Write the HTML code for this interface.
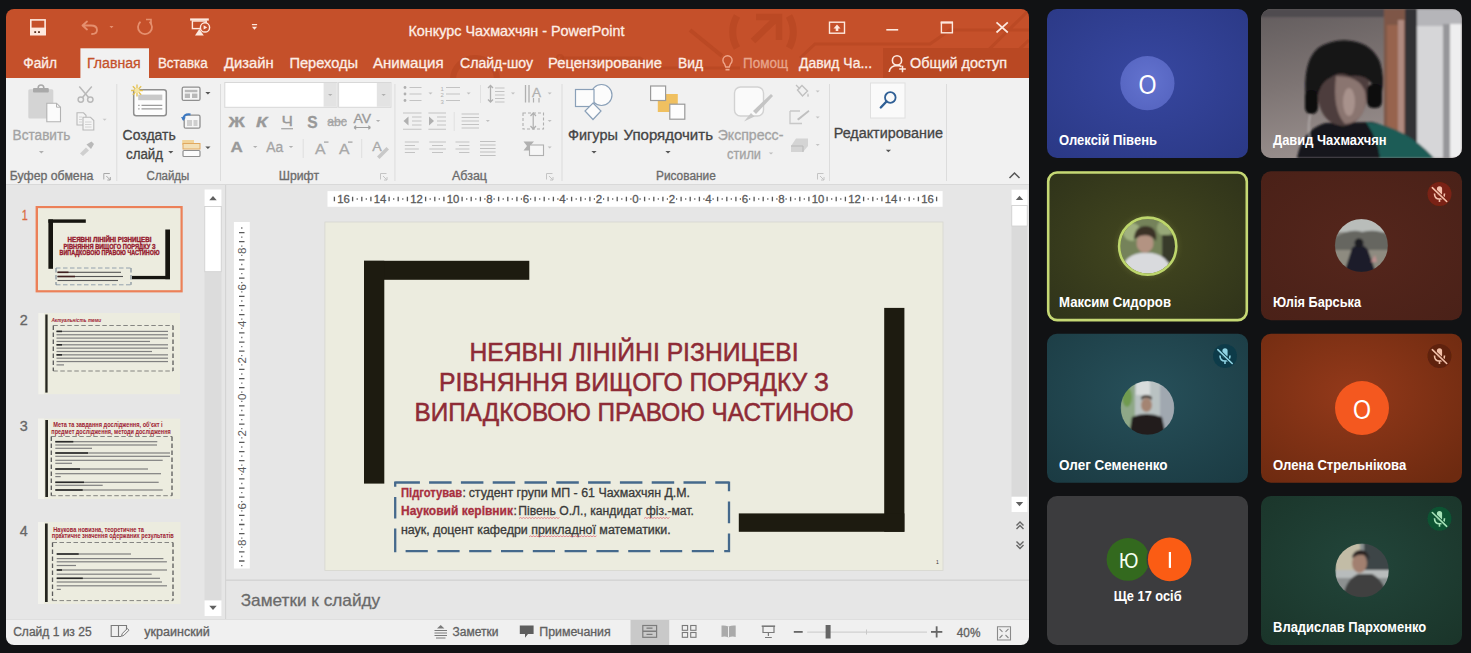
<!DOCTYPE html>
<html><head><meta charset="utf-8"><style>
html,body{margin:0;padding:0;background:#111214;overflow:hidden}
svg{display:block;font-family:"Liberation Sans",sans-serif}
</style></head><body>
<svg width="1471" height="653" viewBox="0 0 1471 653">
<defs>
<clipPath id="win"><rect x="6" y="9" width="1023" height="636" rx="8"/></clipPath>
<radialGradient id="gBlue" cx="50%" cy="45%" r="70%"><stop offset="0" stop-color="#3747a0"/><stop offset="1" stop-color="#2b3986"/></radialGradient>
<radialGradient id="gOlive" cx="50%" cy="50%" r="70%"><stop offset="0" stop-color="#43471f"/><stop offset="1" stop-color="#2f331a"/></radialGradient>
<radialGradient id="gMaroon" cx="50%" cy="50%" r="70%"><stop offset="0" stop-color="#55261c"/><stop offset="1" stop-color="#4a2118"/></radialGradient>
<radialGradient id="gTeal" cx="50%" cy="40%" r="75%"><stop offset="0" stop-color="#27505a"/><stop offset="1" stop-color="#1b3b43"/></radialGradient>
<radialGradient id="gOrange" cx="45%" cy="40%" r="75%"><stop offset="0" stop-color="#93391a"/><stop offset="1" stop-color="#6d2a10"/></radialGradient>
<radialGradient id="gGreen" cx="50%" cy="45%" r="75%"><stop offset="0" stop-color="#22453a"/><stop offset="1" stop-color="#1a3429"/></radialGradient>
</defs>
<g clip-path="url(#win)">
<rect x="6" y="9" width="1023" height="69" fill="#c5502a"/>
<g clip-path="url(#win)" fill="none" stroke="#b3441f" stroke-opacity="0.55">
<path d="M737 16 A32 32 0 0 0 737 48 M789 16 A32 32 0 0 1 789 48" stroke-width="7"/>
<path d="M753 41 L778 17 M756 17 H779 V40" stroke-width="6.5"/>
<path d="M690 30 L722 56" stroke-width="4"/>
<circle cx="475" cy="80" r="22" stroke-width="6"/>
<path d="M560 58 H640 L655 68 H740 M800 58 L815 44 H930 L950 30 H1029 M990 78 L1029 40 M960 78 L1029 10" stroke-width="3"/>
<circle cx="560" cy="58" r="3" stroke-width="2"/>
</g>
<rect x="883" y="48" width="146" height="30" fill="#b94823"/>
<rect x="6" y="78" width="1023" height="106.5" fill="#f1f1f1"/>
<rect x="6" y="184" width="1023" height="1" fill="#d9d9d9"/>
<rect x="6" y="185" width="1023" height="434" fill="#e6e6e6"/>
<rect x="6" y="619" width="1023" height="26" fill="#f0f0f0"/>
<rect x="6" y="619" width="1023" height="1" fill="#dedede"/>
</g>
<text x="408.5" y="35.7" font-size="14.4" fill="#fdeee6" textLength="216" lengthAdjust="spacingAndGlyphs" stroke="#fdeee6" stroke-width="0.3">Конкурс Чахмахчян - PowerPoint</text>
<rect x="80.4" y="48.3" width="68.6" height="30.7" fill="#f1f1f1"/>
<text x="23.3" y="67.5" font-size="14" fill="#fdeee6" textLength="33.7" lengthAdjust="spacingAndGlyphs" stroke="#fdeee6" stroke-width="0.3">Файл</text>
<text x="87" y="67.5" font-size="14" fill="#c5502a" textLength="53.7" lengthAdjust="spacingAndGlyphs" stroke="#c5502a" stroke-width="0.3">Главная</text>
<text x="157.9" y="67.5" font-size="14" fill="#fdeee6" textLength="49.7" lengthAdjust="spacingAndGlyphs" stroke="#fdeee6" stroke-width="0.3">Вставка</text>
<text x="224" y="67.5" font-size="14" fill="#fdeee6" textLength="49.7" lengthAdjust="spacingAndGlyphs" stroke="#fdeee6" stroke-width="0.3">Дизайн</text>
<text x="289.5" y="67.5" font-size="14" fill="#fdeee6" textLength="68.5" lengthAdjust="spacingAndGlyphs" stroke="#fdeee6" stroke-width="0.3">Переходы</text>
<text x="373" y="67.5" font-size="14" fill="#fdeee6" textLength="70.7" lengthAdjust="spacingAndGlyphs" stroke="#fdeee6" stroke-width="0.3">Анимация</text>
<text x="460" y="67.5" font-size="14" fill="#fdeee6" textLength="73" lengthAdjust="spacingAndGlyphs" stroke="#fdeee6" stroke-width="0.3">Слайд-шоу</text>
<text x="548" y="67.5" font-size="14" fill="#fdeee6" textLength="114" lengthAdjust="spacingAndGlyphs" stroke="#fdeee6" stroke-width="0.3">Рецензирование</text>
<text x="678" y="67.5" font-size="14" fill="#fdeee6" textLength="25" lengthAdjust="spacingAndGlyphs" stroke="#fdeee6" stroke-width="0.3">Вид</text>
<text x="799" y="67.5" font-size="14" fill="#fdeee6" textLength="73" lengthAdjust="spacingAndGlyphs" stroke="#fdeee6" stroke-width="0.3">Давид Ча...</text>
<text x="910" y="67.5" font-size="14" fill="#fdeee6" textLength="97" lengthAdjust="spacingAndGlyphs" stroke="#fdeee6" stroke-width="0.3">Общий доступ</text>
<text x="743" y="67.5" font-size="14" fill="#e8a58c" textLength="45" lengthAdjust="spacingAndGlyphs" stroke="#e8a58c" stroke-width="0.3">Помощ</text>
<text x="9.8" y="180.3" font-size="12" fill="#6b6b6b" textLength="83.5" lengthAdjust="spacingAndGlyphs" stroke="#6b6b6b" stroke-width="0.3">Буфер обмена</text>
<text x="146.6" y="180.3" font-size="12" fill="#6b6b6b" textLength="42.7" lengthAdjust="spacingAndGlyphs" stroke="#6b6b6b" stroke-width="0.3">Слайды</text>
<text x="278.8" y="180.3" font-size="12" fill="#6b6b6b" textLength="40.2" lengthAdjust="spacingAndGlyphs" stroke="#6b6b6b" stroke-width="0.3">Шрифт</text>
<text x="452" y="180.3" font-size="12" fill="#6b6b6b" textLength="35" lengthAdjust="spacingAndGlyphs" stroke="#6b6b6b" stroke-width="0.3">Абзац</text>
<text x="656" y="180.3" font-size="12" fill="#6b6b6b" textLength="59.8" lengthAdjust="spacingAndGlyphs" stroke="#6b6b6b" stroke-width="0.3">Рисование</text>
<text x="12.6" y="139.7" font-size="14" fill="#a3a3a3" textLength="57.7" lengthAdjust="spacingAndGlyphs" stroke="#a3a3a3" stroke-width="0.3">Вставить</text>
<text x="122.6" y="139.7" font-size="14" fill="#444444" textLength="53.1" lengthAdjust="spacingAndGlyphs" stroke="#444444" stroke-width="0.3">Создать</text>
<text x="126" y="159" font-size="14" fill="#444444" textLength="37" lengthAdjust="spacingAndGlyphs" stroke="#444444" stroke-width="0.3">слайд</text>
<text x="568" y="139.8" font-size="14" fill="#444444" textLength="49.8" lengthAdjust="spacingAndGlyphs" stroke="#444444" stroke-width="0.3">Фигуры</text>
<text x="623.5" y="139.8" font-size="14" fill="#444444" textLength="89.5" lengthAdjust="spacingAndGlyphs" stroke="#444444" stroke-width="0.3">Упорядочить</text>
<text x="717.7" y="139.8" font-size="14" fill="#a3a3a3" textLength="65.7" lengthAdjust="spacingAndGlyphs" stroke="#a3a3a3" stroke-width="0.3">Экспресс-</text>
<text x="727" y="158.8" font-size="14" fill="#a3a3a3" textLength="34" lengthAdjust="spacingAndGlyphs" stroke="#a3a3a3" stroke-width="0.3">стили</text>
<text x="833.7" y="137.8" font-size="14" fill="#444444" textLength="109.3" lengthAdjust="spacingAndGlyphs" stroke="#444444" stroke-width="0.3">Редактирование</text>
<rect x="324.9" y="222" width="618.1" height="348.5" fill="#ececdf"/>
<rect x="364" y="260.8" width="165.3" height="19.0" fill="#1d1b10"/>
<rect x="364" y="260.8" width="20.3" height="222.8" fill="#1d1b10"/>
<rect x="884.2" y="307.9" width="20.2" height="223.9" fill="#1d1b10"/>
<rect x="738.8" y="513.4" width="165.6" height="18.4" fill="#1d1b10"/>
<text x="634" y="361" font-size="26" fill="#8e2b36" text-anchor="middle" textLength="329" lengthAdjust="spacingAndGlyphs" stroke="#8e2b36" stroke-width="0.55">НЕЯВНІ ЛІНІЙНІ РІЗНИЦЕВІ</text>
<text x="634" y="391.2" font-size="26" fill="#8e2b36" text-anchor="middle" textLength="390" lengthAdjust="spacingAndGlyphs" stroke="#8e2b36" stroke-width="0.55">РІВНЯННЯ ВИЩОГО ПОРЯДКУ З</text>
<text x="634" y="420.6" font-size="26" fill="#8e2b36" text-anchor="middle" textLength="439" lengthAdjust="spacingAndGlyphs" stroke="#8e2b36" stroke-width="0.55">ВИПАДКОВОЮ ПРАВОЮ ЧАСТИНОЮ</text>
<path d="M395.2 482.5 H419.9 M429.1 482.5 H451.6 M460.9 482.5 H483.4 M492.7 482.5 H515.2 M524.5 482.5 H547.0 M556.3 482.5 H578.8 M588.1 482.5 H610.6 M619.9 482.5 H642.4 M651.7 482.5 H674.2 M683.5 482.5 H706.0 M715.3 482.5 H729 M405.6 551.1 H427.8 M437.4 551.1 H459.6 M469.2 551.1 H491.4 M501.0 551.1 H523.2 M532.8 551.1 H555.0 M564.6 551.1 H586.8 M596.4 551.1 H618.6 M628.2 551.1 H650.4 M660.0 551.1 H682.2 M691.8 551.1 H714.0 M724.2 551.1 H730.1 M395.2 481.4 V486.7 M395.2 497 V518.6 M395.2 528.4 V552.2 M729 481.4 V491.3 M729 501.5 V523.3 M729 533.5 V552.2" fill="none" stroke="#45698c" stroke-width="2.3"/>
<text x="401" y="497.1" font-size="12" fill="#a8303f" font-weight="bold" textLength="61.2" lengthAdjust="spacingAndGlyphs" stroke="#a8303f" stroke-width="0.3">Підготував</text>
<text x="462.6" y="497.1" font-size="12" fill="#3a3a3a" stroke="#3a3a3a" stroke-width="0.3">:</text>
<text x="468.7" y="497.1" font-size="12" fill="#3a3a3a" textLength="221.3" lengthAdjust="spacingAndGlyphs" stroke="#3a3a3a" stroke-width="0.3">студент групи МП - 61 Чахмахчян Д.М.</text>
<text x="401" y="515.3" font-size="12" fill="#a8303f" font-weight="bold" textLength="112" lengthAdjust="spacingAndGlyphs" stroke="#a8303f" stroke-width="0.3">Науковий керівник</text>
<text x="513.4" y="515.3" font-size="12" fill="#3a3a3a" stroke="#3a3a3a" stroke-width="0.3">:</text>
<text x="518.2" y="515.3" font-size="12" fill="#3a3a3a" textLength="175.8" lengthAdjust="spacingAndGlyphs" stroke="#3a3a3a" stroke-width="0.3">Півень О.Л., кандидат фіз.-мат.</text>
<text x="401" y="533.6" font-size="12" fill="#3a3a3a" textLength="269.6" lengthAdjust="spacingAndGlyphs" stroke="#3a3a3a" stroke-width="0.3">наук, доцент кафедри прикладної математики.</text>
<rect x="226" y="579.5" width="803" height="1.3" fill="#d2d2d2"/>
<text x="240.7" y="605.6" font-size="17" fill="#6a6a6a" textLength="139.5" lengthAdjust="spacingAndGlyphs" stroke="#6a6a6a" stroke-width="0.3">Заметки к слайду</text>
<text x="13.2" y="636.4" font-size="12" fill="#606060" textLength="78.4" lengthAdjust="spacingAndGlyphs" stroke="#606060" stroke-width="0.3">Слайд 1 из 25</text>
<text x="144.3" y="636.4" font-size="12" fill="#606060" textLength="65.4" lengthAdjust="spacingAndGlyphs" stroke="#606060" stroke-width="0.3">украинский</text>
<text x="452.6" y="636.4" font-size="12" fill="#606060" textLength="45.9" lengthAdjust="spacingAndGlyphs" stroke="#606060" stroke-width="0.3">Заметки</text>
<text x="539.3" y="636.4" font-size="12" fill="#606060" textLength="71.4" lengthAdjust="spacingAndGlyphs" stroke="#606060" stroke-width="0.3">Примечания</text>
<text x="956.8" y="636.8" font-size="12" fill="#606060" textLength="23.6" lengthAdjust="spacingAndGlyphs" stroke="#606060" stroke-width="0.3">40%</text>
<rect x="1047" y="9" width="201" height="149" rx="10" fill="url(#gBlue)"/>
<rect x="1261" y="9" width="201" height="149" rx="10" fill="#6e6a68"/>
<rect x="1047" y="171.3" width="201" height="149" rx="10" fill="url(#gOlive)"/>
<rect x="1261" y="171.3" width="201" height="149" rx="10" fill="url(#gMaroon)"/>
<rect x="1047" y="333.7" width="201" height="149" rx="10" fill="url(#gTeal)"/>
<rect x="1261" y="333.7" width="201" height="149" rx="10" fill="url(#gOrange)"/>
<rect x="1047" y="496" width="201" height="149" rx="10" fill="#3c3c3e"/>
<rect x="1261" y="496" width="201" height="149" rx="10" fill="url(#gGreen)"/>
<rect x="30.8" y="19.9" width="14.3" height="14.6" fill="none" stroke="#fde8de" stroke-width="1.6"/>
<rect x="30" y="27.6" width="15.9" height="7.7" fill="#fde8de"/>
<rect x="34.3" y="31.2" width="1.8" height="1.8" fill="#5a3020"/>
<rect x="38.1" y="31.2" width="1.8" height="1.8" fill="#5a3020"/>
<path d="M82.5 25.5 L87 21.5 M82.5 25.5 L87 29.5 M82.5 25.5 H91 Q97 25.5 97 30 Q97 34 92 34" fill="none" stroke="#e58f6e" stroke-width="1.8" stroke-linecap="round"/>
<path d="M109.5 26 h4 l-2 2.2z" fill="#e58f6e"/>
<path d="M149.5 21.8 A7 7 0 1 1 140.5 21.8" fill="none" stroke="#e58f6e" stroke-width="1.8"/>
<path d="M146 19.5 h5 v5" fill="none" stroke="#e58f6e" stroke-width="1.6"/>
<rect x="190.1" y="18.4" width="18.7" height="2.2" fill="#fde8de"/>
<rect x="192.4" y="21" width="13.8" height="7.6" fill="none" stroke="#fde8de" stroke-width="1.4"/>
<circle cx="205" cy="27.4" r="4.6" fill="#c5502a" stroke="#fde8de" stroke-width="1.4"/>
<path d="M203.6 25.2 L207.2 27.4 L203.6 29.6z" fill="#fde8de"/>
<path d="M199.3 29 L195 35.6 H203.8z" fill="#fde8de"/>
<rect x="251.9" y="24" width="5.2" height="1.2" fill="#fde8de"/>
<path d="M251.9 26.7 h5.2 l-2.6 3z" fill="#fde8de"/>
<rect x="829.5" y="22.2" width="15" height="11" fill="none" stroke="#fde8de" stroke-width="1.4"/>
<path d="M837 24.5 L840.5 28.5 H838.3 V31 H835.7 V28.5 H833.5z" fill="#fde8de"/>
<rect x="886.3" y="29" width="11.9" height="1.6" fill="#fde8de"/>
<rect x="941.4" y="22.4" width="11" height="10.4" fill="none" stroke="#fde8de" stroke-width="1.4"/>
<rect x="940.7" y="21.5" width="12.3" height="2.1" fill="#fde8de"/>
<path d="M996.5 22.3 L1007.8 32.5 M1007.8 22.3 L996.5 32.5" stroke="#fde8de" stroke-width="1.7"/>
<path d="M724.5 63.8 A4.6 4.6 0 1 1 730.5 63.8 L729.3 67 H725.7z" fill="none" stroke="#eea58a" stroke-width="1.4"/>
<rect x="725.5" y="68.8" width="4.0" height="1.7" fill="#eea58a"/>
<circle cx="897" cy="60.4" r="4.6" fill="none" stroke="#fde8de" stroke-width="1.6"/>
<path d="M889.2 72 Q890 65.8 897 65.5 Q900 65.5 901.5 66.5" fill="none" stroke="#fde8de" stroke-width="1.6"/>
<path d="M902.5 65.8 V72.3 M899.2 69 H905.8" stroke="#fde8de" stroke-width="1.5"/>
<rect x="116.3" y="84" width="1.0" height="97" fill="#dcdcdc"/>
<rect x="220" y="84" width="1" height="97" fill="#dcdcdc"/>
<rect x="394.4" y="84" width="1.0" height="97" fill="#dcdcdc"/>
<rect x="561.5" y="84" width="1.0" height="97" fill="#dcdcdc"/>
<rect x="829" y="84" width="1" height="97" fill="#dcdcdc"/>
<rect x="946" y="84" width="1" height="97" fill="#dcdcdc"/>
<rect x="28.3" y="89.2" width="25" height="29.4" rx="1.5" fill="#d4d4d4"/>
<rect x="33" y="88" width="15.8" height="4.6" rx="1" fill="#a9a9a9"/>
<circle cx="41" cy="87.8" r="2.8" fill="none" stroke="#a9a9a9" stroke-width="1.6"/>
<path d="M46.8 103.2 H56.5 L60.5 107.2 V121.8 H46.8z" fill="#fbfbfb" stroke="#b3b3b3" stroke-width="1.1"/>
<path d="M56.5 103.2 V107.2 H60.5" fill="none" stroke="#b3b3b3" stroke-width="1"/>
<path d="M38.9 151.05 h5.0 l-2.5 2.5z" fill="#b0b0b0"/>
<circle cx="80.8" cy="99.6" r="2.7" fill="none" stroke="#b9b9b9" stroke-width="1.5"/>
<circle cx="90.3" cy="99.6" r="2.7" fill="none" stroke="#b9b9b9" stroke-width="1.5"/>
<path d="M82.5 97.5 L91.8 86.5 M88.6 97.5 L79.3 86.5" stroke="#b9b9b9" stroke-width="1.5"/>
<path d="M77 112.8 H83.5 L86 115.3 V125 H77z" fill="#f4f4f4" stroke="#b9b9b9" stroke-width="1.1"/>
<path d="M83 117.3 H90.5 L93.8 120.6 V130 H83z" fill="#f4f4f4" stroke="#b9b9b9" stroke-width="1.1"/>
<path d="M85 122 H91.5 M85 124.5 H91.5 M85 127 H91.5 M79 117 H82 M79 119.5 H82 M79 122 H82" stroke="#cfcfcf" stroke-width="0.9"/>
<path d="M102.6 118.8 h4 l-2 2z" fill="#c8c8c8"/>
<path d="M80 153.5 L86 147.5 L89 150.5 L83 156z" fill="#cfcfcf"/>
<path d="M86.5 144.5 L91.5 141.5 L94 144 L91 149z" fill="#b9b9b9"/>
<rect x="133.7" y="89.8" width="32.6" height="26" rx="2.5" fill="#fdfdfd" stroke="#8f8f8f" stroke-width="1.5"/>
<rect x="138.2" y="94.6" width="24.1" height="5.6" fill="#c9c9c9"/>
<path d="M141.5 105.4 H162.3 M141.5 108.9 H162.3" stroke="#9a9a9a" stroke-width="1.1"/>
<path d="M138.2 105.4 H139.6 M138.2 108.9 H139.6" stroke="#9a9a9a" stroke-width="1.1"/>
<g stroke="#e3c050" stroke-width="1.3"><path d="M137 84.6 V96.4 M131.1 90.5 H142.9 M132.8 86.3 L141.2 94.7 M141.2 86.3 L132.8 94.7"/></g>
<circle cx="137" cy="90.5" r="2.6" fill="#f6e6a6"/>
<path d="M168.20000000000002 151.0 h5.2 l-2.6 2.6z" fill="#555"/>
<rect x="182.2" y="87.2" width="17.8" height="13.2" rx="1.5" fill="#f6f6f6" stroke="#8f8f8f" stroke-width="1.3"/>
<rect x="184.8" y="89.8" width="12.6" height="2.4" fill="#b9b9b9"/>
<rect x="184.8" y="93.6" width="5.2" height="4.4" fill="#b9b9b9"/>
<rect x="192" y="93.6" width="5.4" height="4.4" fill="#b9b9b9"/>
<path d="M205.3 92.0 h5.2 l-2.6 2.6z" fill="#555"/>
<rect x="184.2" y="115.2" width="15.8" height="13" rx="1.5" fill="#f6f6f6" stroke="#8f8f8f" stroke-width="1.3"/>
<rect x="187" y="120" width="5" height="6" fill="#cfcfcf"/>
<rect x="193.5" y="120" width="4.0" height="6" fill="#cfcfcf"/>
<path d="M183 119.5 Q184 113.5 190.5 114.5" fill="none" stroke="#3b78c2" stroke-width="2"/>
<path d="M181 117 L183.2 121 L185.8 117.6z" fill="#3b78c2"/>
<rect x="182.2" y="140" width="11.8" height="5" fill="#f1d39a"/>
<rect x="183" y="143.5" width="17" height="5.5" fill="#f3e0b8" stroke="#e0a860" stroke-width="1"/>
<rect x="183" y="150.5" width="17" height="6" rx="1" fill="#fbfbfb" stroke="#8f8f8f" stroke-width="1.2"/>
<path d="M205.3 146.39999999999998 h5.2 l-2.6 2.6z" fill="#555"/>
<rect x="224.8" y="82.5" width="112.3" height="24.8" fill="#ffffff" stroke="#d8d8d8" stroke-width="1"/>
<rect x="323.6" y="83" width="13.0" height="23.8" fill="#e3e3e3"/>
<rect x="338.6" y="82.5" width="52.3" height="24.8" fill="#ffffff" stroke="#d8d8d8" stroke-width="1"/>
<rect x="376.8" y="83" width="13.6" height="23.8" fill="#e3e3e3"/>
<path d="M328.0 93.9 h4.4 l-2.2 2.2z" fill="#b0b0b0"/>
<path d="M381.40000000000003 93.9 h4.4 l-2.2 2.2z" fill="#b0b0b0"/>
<text x="228.5" y="126.9" font-size="15" fill="#999999" font-weight="bold" textLength="16.3" lengthAdjust="spacingAndGlyphs" stroke="#999999" stroke-width="0.3">Ж</text>
<text x="256.1" y="126.9" font-size="15" fill="#999999" font-weight="bold" textLength="11.5" lengthAdjust="spacingAndGlyphs" stroke="#999999" stroke-width="0.3" font-style="italic">К</text>
<text x="281.5" y="126.2" font-size="14" fill="#999999" textLength="11.5" lengthAdjust="spacingAndGlyphs" stroke="#999999" stroke-width="0.3">Ч</text>
<rect x="281.2" y="128.2" width="11.8" height="1.1" fill="#999999"/>
<text x="307.2" y="127.5" font-size="16" fill="#999999" font-weight="bold" textLength="10.4" lengthAdjust="spacingAndGlyphs" stroke="#999999" stroke-width="0.3">S</text>
<text x="327.3" y="125.5" font-size="12" fill="#a4a4a4" textLength="19.6" lengthAdjust="spacingAndGlyphs" stroke="#a4a4a4" stroke-width="0.3">abc</text>
<rect x="327.3" y="121.2" width="19.7" height="1.1" fill="#a4a4a4"/>
<text x="353.4" y="123.3" font-size="12" fill="#9a9a9a" textLength="17.6" lengthAdjust="spacingAndGlyphs" stroke="#9a9a9a" stroke-width="0.3">AV</text>
<path d="M354 127.5 H370.5 M354 127.5 l2.2 -1.8 M354 127.5 l2.2 1.8 M370.5 127.5 l-2.2 -1.8 M370.5 127.5 l-2.2 1.8" stroke="#a0a0a0" stroke-width="1.1" fill="none"/>
<path d="M375.90000000000003 119.9 h4.4 l-2.2 2.2z" fill="#b0b0b0"/>
<text x="230.5" y="151.6" font-size="15" fill="#999999" font-weight="bold" textLength="12.3" lengthAdjust="spacingAndGlyphs" stroke="#999999" stroke-width="0.3">A</text>
<path d="M253.0 145.9 h4.4 l-2.2 2.2z" fill="#b0b0b0"/>
<text x="266.3" y="151.6" font-size="14" fill="#a4a4a4" textLength="16.9" lengthAdjust="spacingAndGlyphs" stroke="#a4a4a4" stroke-width="0.3">Aa</text>
<path d="M288.8 145.9 h4.4 l-2.2 2.2z" fill="#b0b0b0"/>
<rect x="302.7" y="139" width="1.0" height="19" fill="#dedede"/>
<text x="315" y="154.2" font-size="15" fill="#a8a8a8" textLength="10.5" lengthAdjust="spacingAndGlyphs" stroke="#a8a8a8" stroke-width="0.3">A</text>
<rect x="324" y="141.5" width="4.5" height="1.2" fill="#a0a0a0"/>
<text x="339" y="154.2" font-size="15" fill="#a8a8a8" textLength="10.5" lengthAdjust="spacingAndGlyphs" stroke="#a8a8a8" stroke-width="0.3">A</text>
<rect x="348" y="141.5" width="4.5" height="1.2" fill="#a0a0a0"/>
<rect x="361.2" y="139" width="1.0" height="19" fill="#dedede"/>
<text x="372.3" y="151" font-size="13" fill="#a8a8a8" textLength="9.5" lengthAdjust="spacingAndGlyphs" stroke="#a8a8a8" stroke-width="0.3">A</text>
<path d="M377 156.5 L386.5 147 L389 149.5 L379.5 159z" fill="#c8c8c8"/>
<path d="M103.8 179.5 V173.5 H109.8" fill="none" stroke="#a8a8a8" stroke-width="1"/>
<path d="M106.3 176.0 L110.3 180.0 M110.3 177.0 V180.0 H107.3" fill="none" stroke="#a8a8a8" stroke-width="1"/>
<path d="M380.5 179.5 V173.5 H386.5" fill="none" stroke="#c4c4c4" stroke-width="1"/>
<path d="M383.0 176.0 L387.0 180.0 M387.0 177.0 V180.0 H384.0" fill="none" stroke="#c4c4c4" stroke-width="1"/>
<path d="M546.5 179.5 V173.5 H552.5" fill="none" stroke="#c4c4c4" stroke-width="1"/>
<path d="M549.0 176.0 L553.0 180.0 M553.0 177.0 V180.0 H550.0" fill="none" stroke="#c4c4c4" stroke-width="1"/>
<path d="M817.5 179.5 V173.5 H823.5" fill="none" stroke="#c4c4c4" stroke-width="1"/>
<path d="M820.0 176.0 L824.0 180.0 M824.0 177.0 V180.0 H821.0" fill="none" stroke="#c4c4c4" stroke-width="1"/>
<circle cx="405" cy="87.5" r="1.4" fill="#b0b0b0"/>
<circle cx="405" cy="94" r="1.4" fill="#b0b0b0"/>
<circle cx="405" cy="100.5" r="1.4" fill="#b0b0b0"/>
<path d="M409.5 87.5 H421.5 M409.5 94 H421.5 M409.5 100.5 H421.5" stroke="#c3c3c3" stroke-width="1.1"/>
<path d="M428.5 92.5 h4 l-2 2z" fill="#c0c0c0"/>
<text x="440.5" y="90.5" font-size="6" fill="#b0b0b0">1</text>
<text x="440.5" y="97" font-size="6" fill="#b0b0b0">2</text>
<text x="440.5" y="103.5" font-size="6" fill="#b0b0b0">3</text>
<path d="M446 87.5 H460 M446 94 H460 M446 100.5 H460" stroke="#c3c3c3" stroke-width="1.1"/>
<path d="M466.6 92.5 h4 l-2 2z" fill="#c0c0c0"/>
<rect x="480" y="85" width="1" height="18" fill="#e0e0e0"/>
<path d="M490.5 85.5 V102 M488 88 L490.5 85.5 L493 88 M488 99.5 L490.5 102 L493 99.5" fill="none" stroke="#b0b0b0" stroke-width="1.3"/>
<path d="M495 88 H504.5 M495 91.5 H504.5 M495 95 H504.5 M495 98.5 H504.5 M495 102 H504.5" stroke="#c3c3c3" stroke-width="1.1"/>
<path d="M511 92.5 h4 l-2 2z" fill="#c0c0c0"/>
<path d="M525.5 85 V102.5 M529 85 V102.5" stroke="#b0b0b0" stroke-width="1.3"/>
<text x="532" y="97" font-size="13" fill="#b0b0b0" textLength="9" lengthAdjust="spacingAndGlyphs" stroke="#b0b0b0" stroke-width="0.3">A</text>
<path d="M533.5 98 V102.5 M539 98 V102.5" stroke="#b0b0b0" stroke-width="1.2"/>
<path d="M547.7 92.5 h4 l-2 2z" fill="#c0c0c0"/>
<path d="M403 113 H421.5 M403 129.2 H421.5" stroke="#c3c3c3" stroke-width="1.1"/>
<path d="M412 117 H421.5 M412 121 H421.5 M412 125 H421.5" stroke="#c3c3c3" stroke-width="1.1"/>
<path d="M403.5 121 L408.5 116.5 V125.5z" fill="#b0b0b0"/>
<path d="M428.4 113 H446 M428.4 129.2 H446" stroke="#c3c3c3" stroke-width="1.1"/>
<path d="M437 117 H446 M437 121 H446 M437 125 H446" stroke="#c3c3c3" stroke-width="1.1"/>
<path d="M434 121 L429 116.5 V125.5z" fill="#b0b0b0"/>
<rect x="453.7" y="112" width="1.0" height="19" fill="#e0e0e0"/>
<path d="M461.6 114 H479 M461.6 117.5 H479 M461.6 121 H479 M461.6 124.5 H479 M461.6 128 H479" stroke="#c3c3c3" stroke-width="1.1"/>
<path d="M485.8 120.0 h4 l-2 2z" fill="#c0c0c0"/>
<rect x="523" y="113" width="20.5" height="16" fill="none" stroke="#b0b0b0" stroke-width="1.1" stroke-dasharray="3 2"/>
<path d="M533.2 113 V129 M530.5 116 L533.2 113 L536 116 M530.5 126 L533.2 129 L536 126" fill="none" stroke="#b0b0b0" stroke-width="1.2"/>
<path d="M547.7 120.0 h4 l-2 2z" fill="#c0c0c0"/>
<path d="M404.8 142 H418.8 M404.8 149 H418.8" stroke="#c3c3c3" stroke-width="1.1"/>
<path d="M404.8 145.5 H415 M404.8 152.5 H415" stroke="#c3c3c3" stroke-width="1.1"/>
<path d="M429.3 142 H445.9 M429.3 149 H445.9" stroke="#c3c3c3" stroke-width="1.1"/>
<path d="M432 145.5 H443 M432 152.5 H443" stroke="#c3c3c3" stroke-width="1.1"/>
<path d="M455.5 142 H469.4 M455.5 149 H469.4" stroke="#c3c3c3" stroke-width="1.1"/>
<path d="M459 145.5 H469.4 M459 152.5 H469.4" stroke="#c3c3c3" stroke-width="1.1"/>
<path d="M480 141.5 H495.6 M480 145 H495.6 M480 148.5 H495.6 M480 152 H495.6 M480 155.5 H495.6" stroke="#c0c0c0" stroke-width="1.2"/>
<path d="M523.5 141.5 H534 L530 146 L534 150.5 H523.5 L527 146z" fill="#b0b0b0"/>
<rect x="529.5" y="145" width="14" height="10.5" fill="#f6f6f6" stroke="#b0b0b0" stroke-width="1.1"/>
<path d="M547.7 146.5 h4 l-2 2z" fill="#c0c0c0"/>
<circle cx="601.5" cy="95" r="10.5" fill="#fcfcfc" stroke="#8aa0b8" stroke-width="1.2"/>
<rect x="575.5" y="89.5" width="18.5" height="17" fill="#fcfcfc" stroke="#8aa0b8" stroke-width="1.2"/>
<path d="M593 103 L601 111 L593 119.5 L585 111z" fill="#fcfcfc" stroke="#8aa0b8" stroke-width="1.2"/>
<path d="M591.4 151.0 h5.2 l-2.6 2.6z" fill="#555"/>
<rect x="657.8" y="94" width="20.0" height="18" fill="#f0c060"/>
<rect x="650.6" y="86" width="15" height="14.5" fill="#fdfdfd" stroke="#9a9a9a" stroke-width="1.2"/>
<rect x="669.8" y="104.2" width="15" height="15" fill="#fdfdfd" stroke="#9a9a9a" stroke-width="1.2"/>
<path d="M665.4 151.0 h5.2 l-2.6 2.6z" fill="#555"/>
<rect x="734.5" y="87" width="29" height="29" rx="6" fill="#fafafa" stroke="#d2d2d2" stroke-width="1.4"/>
<path d="M744 121.5 L751 113 L754.5 116.5z" fill="#c9c9c9"/>
<path d="M753 111 L771 94 L773 96 L756 114z" fill="#c4c4c4"/>
<path d="M768.8 152.4 h4.4 l-2.2 2.2z" fill="#c0c0c0"/>
<path d="M797.5 90 L802 85.5 L807.5 91 L802.5 96 z" fill="none" stroke="#c0c0c0" stroke-width="1.4"/>
<path d="M796 85 L800 89" stroke="#c0c0c0" stroke-width="1.3"/>
<path d="M808 93 q1.5 3 0 4 q-1.5 -1 0 -4z" fill="#c0c0c0"/>
<path d="M815.7 90.5 h4 l-2 2z" fill="#c4c4c4"/>
<path d="M790 111 H800 M790 111 V123.5 H802" fill="none" stroke="#c8c8c8" stroke-width="1.3"/>
<path d="M797 119 L808.5 110 L809.5 111.5 L798.5 120.5z" fill="#c0c0c0"/>
<path d="M815.7 116.5 h4 l-2 2z" fill="#c4c4c4"/>
<path d="M791 146 L796 138.5 H808 V146 L803 152 H791z" fill="#d4d4d4"/>
<path d="M791 146 H803 V152" fill="none" stroke="#b8b8b8" stroke-width="1"/>
<path d="M815.7 144.0 h4 l-2 2z" fill="#c4c4c4"/>
<rect x="870.5" y="83" width="34.5" height="35" fill="#fafafa" stroke="#e0e0e0" stroke-width="1"/>
<circle cx="890.3" cy="97.5" r="5.3" fill="none" stroke="#2f5f95" stroke-width="1.8"/>
<path d="M886.5 101.5 L880.8 107.5" stroke="#2f5f95" stroke-width="2.4" stroke-linecap="round"/>
<path d="M885.8 149.7 h5.2 l-2.6 2.6z" fill="#555"/>
<path d="M1009.5 178 L1014.5 173 L1019.5 178" fill="none" stroke="#555" stroke-width="1.5"/>
<rect x="225" y="185" width="1.2" height="434" fill="#d4d4d4"/>
<rect x="204.5" y="189.4" width="17.0" height="426.6" fill="#dcdcdc"/>
<rect x="204.5" y="189.4" width="17.0" height="16.6" fill="#ffffff"/>
<path d="M209.3 200.3 h7.4 l-3.7 -4.3z" fill="#606060"/>
<rect x="204.8" y="206.5" width="16.4" height="65.2" fill="#ffffff" stroke="#cfcfcf" stroke-width="0.8"/>
<rect x="204.5" y="600.4" width="17.0" height="15.6" fill="#ffffff"/>
<path d="M209.3 605.8 h7.4 l-3.7 4.3z" fill="#606060"/>
<rect x="1011.5" y="189.6" width="16.0" height="322.4" fill="#dadada"/>
<rect x="1011.5" y="189.6" width="16.0" height="15.6" fill="#ffffff"/>
<path d="M1015.8 200 h7.4 l-3.7 -4.2z" fill="#606060"/>
<rect x="1011.8" y="205.6" width="15.4" height="20.4" fill="#ffffff" stroke="#cfcfcf" stroke-width="0.8"/>
<rect x="1011.5" y="496.7" width="16.0" height="15.3" fill="#ffffff"/>
<path d="M1015.8 502 h7.4 l-3.7 4.2z" fill="#606060"/>
<path d="M1016.5 525.5 L1020 522 L1023.5 525.5 M1016.5 529 L1020 525.5 L1023.5 529" fill="none" stroke="#666" stroke-width="1.4"/>
<path d="M1016.5 541.5 L1020 545 L1023.5 541.5 M1016.5 545 L1020 548.5 L1023.5 545" fill="none" stroke="#666" stroke-width="1.4"/>
<rect x="327.5" y="191.1" width="615.1" height="15.7" fill="#ffffff"/>
<text x="343.5" y="203.2" font-size="11.5" fill="#5a5a5a" text-anchor="middle" textLength="12.6" lengthAdjust="spacingAndGlyphs" stroke="#5a5a5a" stroke-width="0.3">16</text>
<text x="380.0" y="203.2" font-size="11.5" fill="#5a5a5a" text-anchor="middle" textLength="12.6" lengthAdjust="spacingAndGlyphs" stroke="#5a5a5a" stroke-width="0.3">14</text>
<text x="416.5" y="203.2" font-size="11.5" fill="#5a5a5a" text-anchor="middle" textLength="12.6" lengthAdjust="spacingAndGlyphs" stroke="#5a5a5a" stroke-width="0.3">12</text>
<text x="453.0" y="203.2" font-size="11.5" fill="#5a5a5a" text-anchor="middle" textLength="12.6" lengthAdjust="spacingAndGlyphs" stroke="#5a5a5a" stroke-width="0.3">10</text>
<text x="489.5" y="203.2" font-size="11.5" fill="#5a5a5a" text-anchor="middle" textLength="6.4" lengthAdjust="spacingAndGlyphs" stroke="#5a5a5a" stroke-width="0.3">8</text>
<text x="526.0" y="203.2" font-size="11.5" fill="#5a5a5a" text-anchor="middle" textLength="6.4" lengthAdjust="spacingAndGlyphs" stroke="#5a5a5a" stroke-width="0.3">6</text>
<text x="562.5" y="203.2" font-size="11.5" fill="#5a5a5a" text-anchor="middle" textLength="6.4" lengthAdjust="spacingAndGlyphs" stroke="#5a5a5a" stroke-width="0.3">4</text>
<text x="599.0" y="203.2" font-size="11.5" fill="#5a5a5a" text-anchor="middle" textLength="6.4" lengthAdjust="spacingAndGlyphs" stroke="#5a5a5a" stroke-width="0.3">2</text>
<text x="635.5" y="203.2" font-size="11.5" fill="#5a5a5a" text-anchor="middle" textLength="6.4" lengthAdjust="spacingAndGlyphs" stroke="#5a5a5a" stroke-width="0.3">0</text>
<text x="672.0" y="203.2" font-size="11.5" fill="#5a5a5a" text-anchor="middle" textLength="6.4" lengthAdjust="spacingAndGlyphs" stroke="#5a5a5a" stroke-width="0.3">2</text>
<text x="708.5" y="203.2" font-size="11.5" fill="#5a5a5a" text-anchor="middle" textLength="6.4" lengthAdjust="spacingAndGlyphs" stroke="#5a5a5a" stroke-width="0.3">4</text>
<text x="745.0" y="203.2" font-size="11.5" fill="#5a5a5a" text-anchor="middle" textLength="6.4" lengthAdjust="spacingAndGlyphs" stroke="#5a5a5a" stroke-width="0.3">6</text>
<text x="781.5" y="203.2" font-size="11.5" fill="#5a5a5a" text-anchor="middle" textLength="6.4" lengthAdjust="spacingAndGlyphs" stroke="#5a5a5a" stroke-width="0.3">8</text>
<text x="818.0" y="203.2" font-size="11.5" fill="#5a5a5a" text-anchor="middle" textLength="12.6" lengthAdjust="spacingAndGlyphs" stroke="#5a5a5a" stroke-width="0.3">10</text>
<text x="854.5" y="203.2" font-size="11.5" fill="#5a5a5a" text-anchor="middle" textLength="12.6" lengthAdjust="spacingAndGlyphs" stroke="#5a5a5a" stroke-width="0.3">12</text>
<text x="891.0" y="203.2" font-size="11.5" fill="#5a5a5a" text-anchor="middle" textLength="12.6" lengthAdjust="spacingAndGlyphs" stroke="#5a5a5a" stroke-width="0.3">14</text>
<text x="927.5" y="203.2" font-size="11.5" fill="#5a5a5a" text-anchor="middle" textLength="12.6" lengthAdjust="spacingAndGlyphs" stroke="#5a5a5a" stroke-width="0.3">16</text>
<path d="M352.6 196.8 V201.2 M356.6 199 H357.8 M361.8 196.8 V201.2 M365.7 199 H366.9 M370.9 196.8 V201.2 M334.4 196.8 V201.2 M389.1 196.8 V201.2 M393.1 199 H394.3 M398.2 196.8 V201.2 M402.2 199 H403.4 M407.4 196.8 V201.2 M425.6 196.8 V201.2 M429.6 199 H430.8 M434.8 196.8 V201.2 M438.7 199 H439.9 M443.9 196.8 V201.2 M462.1 196.8 V201.2 M466.1 199 H467.3 M471.2 196.8 V201.2 M475.2 199 H476.4 M480.4 196.8 V201.2 M484.3 199 H485.5 M493.5 199 H494.7 M498.6 196.8 V201.2 M502.6 199 H503.8 M507.8 196.8 V201.2 M511.7 199 H512.9 M516.9 196.8 V201.2 M520.8 199 H522.0 M530.0 199 H531.2 M535.1 196.8 V201.2 M539.1 199 H540.3 M544.2 196.8 V201.2 M548.2 199 H549.4 M553.4 196.8 V201.2 M557.3 199 H558.5 M566.5 199 H567.7 M571.6 196.8 V201.2 M575.6 199 H576.8 M580.8 196.8 V201.2 M584.7 199 H585.9 M589.9 196.8 V201.2 M593.8 199 H595.0 M603.0 199 H604.2 M608.1 196.8 V201.2 M612.1 199 H613.3 M617.2 196.8 V201.2 M621.2 199 H622.4 M626.4 196.8 V201.2 M630.3 199 H631.5 M639.5 199 H640.7 M644.6 196.8 V201.2 M648.6 199 H649.8 M653.8 196.8 V201.2 M657.7 199 H658.9 M662.9 196.8 V201.2 M666.8 199 H668.0 M676.0 199 H677.2 M681.1 196.8 V201.2 M685.1 199 H686.3 M690.2 196.8 V201.2 M694.2 199 H695.4 M699.4 196.8 V201.2 M703.3 199 H704.5 M712.5 199 H713.7 M717.6 196.8 V201.2 M721.6 199 H722.8 M726.8 196.8 V201.2 M730.7 199 H731.9 M735.9 196.8 V201.2 M739.8 199 H741.0 M749.0 199 H750.2 M754.1 196.8 V201.2 M758.1 199 H759.3 M763.2 196.8 V201.2 M767.2 199 H768.4 M772.4 196.8 V201.2 M776.3 199 H777.5 M785.5 199 H786.7 M790.6 196.8 V201.2 M794.6 199 H795.8 M799.8 196.8 V201.2 M803.7 199 H804.9 M808.9 196.8 V201.2 M827.1 196.8 V201.2 M831.1 199 H832.3 M836.2 196.8 V201.2 M840.2 199 H841.4 M845.4 196.8 V201.2 M863.6 196.8 V201.2 M867.6 199 H868.8 M872.8 196.8 V201.2 M876.7 199 H877.9 M881.9 196.8 V201.2 M900.1 196.8 V201.2 M904.1 199 H905.3 M909.2 196.8 V201.2 M913.2 199 H914.4 M918.4 196.8 V201.2 M936.6 196.8 V201.2" stroke="#5a5a5a" stroke-width="1.3"/>
<rect x="233.9" y="222" width="15.9" height="346.5" fill="#ffffff"/>
<text x="0" y="0" font-size="11.5" fill="#5a5a5a" text-anchor="middle" transform="translate(245.8 250.8) rotate(-90)">8</text>
<text x="0" y="0" font-size="11.5" fill="#5a5a5a" text-anchor="middle" transform="translate(245.8 287.3) rotate(-90)">6</text>
<text x="0" y="0" font-size="11.5" fill="#5a5a5a" text-anchor="middle" transform="translate(245.8 323.8) rotate(-90)">4</text>
<text x="0" y="0" font-size="11.5" fill="#5a5a5a" text-anchor="middle" transform="translate(245.8 360.3) rotate(-90)">2</text>
<text x="0" y="0" font-size="11.5" fill="#5a5a5a" text-anchor="middle" transform="translate(245.8 396.8) rotate(-90)">0</text>
<text x="0" y="0" font-size="11.5" fill="#5a5a5a" text-anchor="middle" transform="translate(245.8 433.3) rotate(-90)">2</text>
<text x="0" y="0" font-size="11.5" fill="#5a5a5a" text-anchor="middle" transform="translate(245.8 469.8) rotate(-90)">4</text>
<text x="0" y="0" font-size="11.5" fill="#5a5a5a" text-anchor="middle" transform="translate(245.8 506.3) rotate(-90)">6</text>
<text x="0" y="0" font-size="11.5" fill="#5a5a5a" text-anchor="middle" transform="translate(245.8 542.8) rotate(-90)">8</text>
<path d="M241.2 228.0 H242.4 M239 232.6 H244.5 M241.2 237.1 H242.4 M239 241.7 H244.5 M241.2 246.2 H242.4 M241.2 255.4 H242.4 M239 259.9 H244.5 M241.2 264.5 H242.4 M239 269.1 H244.5 M241.2 273.6 H242.4 M239 278.2 H244.5 M241.2 282.7 H242.4 M241.2 291.9 H242.4 M239 296.4 H244.5 M241.2 301.0 H242.4 M239 305.6 H244.5 M241.2 310.1 H242.4 M239 314.7 H244.5 M241.2 319.2 H242.4 M241.2 328.4 H242.4 M239 332.9 H244.5 M241.2 337.5 H242.4 M239 342.1 H244.5 M241.2 346.6 H242.4 M239 351.2 H244.5 M241.2 355.7 H242.4 M241.2 364.9 H242.4 M239 369.4 H244.5 M241.2 374.0 H242.4 M239 378.6 H244.5 M241.2 383.1 H242.4 M239 387.7 H244.5 M241.2 392.2 H242.4 M241.2 401.4 H242.4 M239 405.9 H244.5 M241.2 410.5 H242.4 M239 415.1 H244.5 M241.2 419.6 H242.4 M239 424.2 H244.5 M241.2 428.7 H242.4 M241.2 437.9 H242.4 M239 442.4 H244.5 M241.2 447.0 H242.4 M239 451.6 H244.5 M241.2 456.1 H242.4 M239 460.7 H244.5 M241.2 465.2 H242.4 M241.2 474.4 H242.4 M239 478.9 H244.5 M241.2 483.5 H242.4 M239 488.1 H244.5 M241.2 492.6 H242.4 M239 497.2 H244.5 M241.2 501.7 H242.4 M241.2 510.9 H242.4 M239 515.4 H244.5 M241.2 520.0 H242.4 M239 524.5 H244.5 M241.2 529.1 H242.4 M239 533.7 H244.5 M241.2 538.2 H242.4 M241.2 547.4 H242.4 M239 551.9 H244.5 M241.2 556.5 H242.4 M239 561.0 H244.5 M241.2 565.6 H242.4" stroke="#5a5a5a" stroke-width="1.3"/>
<rect x="324.9" y="222" width="618.1" height="348.5" fill="none" stroke="#d6d6cf" stroke-width="0.8"/>
<text x="936" y="563.5" font-size="5" fill="#333">1</text>
<path d="M519 518.5 L520.5 517.5 L522.0 518.5 L523.5 517.5 L525.0 518.5 L526.5 517.5 L528.0 518.5 L529.5 517.5 L531.0 518.5 L532.5 517.5 L534.0 518.5 L535.5 517.5 L537.0 518.5 L538.5 517.5 L540.0 518.5 L541.5 517.5 L543.0 518.5 L544.5 517.5 L546.0 518.5 L547.5 517.5 L549.0 518.5 L550.5 517.5 L552.0 518.5 L553.5 517.5 L555.0 518.5 L556.5 517.5 L558.0 518.5 L559.5 517.5" fill="none" stroke="#e06070" stroke-width="0.7"/>
<path d="M644 518.5 L645.5 517.5 L647.0 518.5 L648.5 517.5 L650.0 518.5 L651.5 517.5 L653.0 518.5 L654.5 517.5 L656.0 518.5 L657.5 517.5 L659.0 518.5 L660.5 517.5 L662.0 518.5 L663.5 517.5 L665.0 518.5 L666.5 517.5 L668.0 518.5 L669.5 517.5" fill="none" stroke="#e06070" stroke-width="0.7"/>
<path d="M529 536.8 L530.5 535.8 L532.0 536.8 L533.5 535.8 L535.0 536.8 L536.5 535.8 L538.0 536.8 L539.5 535.8 L541.0 536.8 L542.5 535.8 L544.0 536.8 L545.5 535.8 L547.0 536.8 L548.5 535.8 L550.0 536.8 L551.5 535.8 L553.0 536.8 L554.5 535.8 L556.0 536.8 L557.5 535.8 L559.0 536.8 L560.5 535.8 L562.0 536.8 L563.5 535.8 L565.0 536.8 L566.5 535.8 L568.0 536.8 L569.5 535.8 L571.0 536.8 L572.5 535.8 L574.0 536.8 L575.5 535.8 L577.0 536.8 L578.5 535.8 L580.0 536.8 L581.5 535.8 L583.0 536.8 L584.5 535.8 L586.0 536.8 L587.5 535.8 L589.0 536.8 L590.5 535.8 L592.0 536.8 L593.5 535.8 L595.0 536.8 L596.5 535.8" fill="none" stroke="#e06070" stroke-width="0.7"/>
<rect x="36.8" y="207.2" width="144.7" height="84" fill="none" stroke="#ec8058" stroke-width="2.4"/>
<text x="21.8" y="220.3" font-size="14" fill="#d96a40" textLength="6" lengthAdjust="spacingAndGlyphs" stroke="#d96a40" stroke-width="0.3">1</text>
<text x="19.8" y="325.3" font-size="14" fill="#666" textLength="8" lengthAdjust="spacingAndGlyphs" stroke="#666" stroke-width="0.3">2</text>
<text x="19.8" y="431" font-size="14" fill="#666" textLength="8" lengthAdjust="spacingAndGlyphs" stroke="#666" stroke-width="0.3">3</text>
<text x="19.8" y="535.7" font-size="14" fill="#666" textLength="8" lengthAdjust="spacingAndGlyphs" stroke="#666" stroke-width="0.3">4</text>
<rect x="38" y="208.3" width="142.3" height="81.9" fill="#ececdf"/>
<rect x="48.4" y="219.4" width="37.4" height="3.4" fill="#161510"/>
<rect x="48.4" y="219.4" width="4.6" height="49.4" fill="#161510"/>
<rect x="165.3" y="229.5" width="4.7" height="49.7" fill="#161510"/>
<rect x="132" y="275.9" width="38" height="3.3" fill="#161510"/>
<text x="109.5" y="241.8" font-size="6.4" fill="#962030" font-weight="bold" text-anchor="middle" textLength="84" lengthAdjust="spacingAndGlyphs" stroke="#962030" stroke-width="0.35">НЕЯВНІ ЛІНІЙНІ РІЗНИЦЕВІ</text>
<text x="109.5" y="248.5" font-size="6.4" fill="#962030" font-weight="bold" text-anchor="middle" textLength="92" lengthAdjust="spacingAndGlyphs" stroke="#962030" stroke-width="0.35">РІВНЯННЯ ВИЩОГО ПОРЯДКУ З</text>
<text x="109.5" y="255.2" font-size="6.4" fill="#962030" font-weight="bold" text-anchor="middle" textLength="100" lengthAdjust="spacingAndGlyphs" stroke="#962030" stroke-width="0.35">ВИПАДКОВОЮ ПРАВОЮ ЧАСТИНОЮ</text>
<path d="M56 268 H131 M56 284.8 H131" stroke="#8a9aa8" stroke-width="0.9" stroke-dasharray="4.5 2.5"/>
<path d="M56 268 V284.8 M131 268 V284.8" stroke="#6a7a8a" stroke-width="1" stroke-dasharray="4.5 2.5"/>
<rect x="57.5" y="271.75" width="63.5" height="1.1" fill="#555555"/>
<rect x="57.5" y="271.5" width="11.0" height="1.6" fill="#402020"/>
<rect x="57.5" y="275.95" width="65.5" height="1.1" fill="#555555"/>
<rect x="57.5" y="275.7" width="17.5" height="1.6" fill="#402020"/>
<rect x="57.5" y="279.95" width="60.5" height="1.1" fill="#555555"/>
<rect x="38.4" y="313" width="141.6" height="81.2" fill="#ececdf"/>
<rect x="38.4" y="313" width="5.6" height="81.2" fill="#f2f2ec"/>
<rect x="45.3" y="314.5" width="2.3" height="78.1" fill="#252520"/>
<text x="51.4" y="321.8" font-size="6.2" fill="#9e2232" font-weight="bold" font-style="italic" textLength="49.8" lengthAdjust="spacingAndGlyphs">Актуальність теми</text>
<path d="M53.3 325.5 H173 M53.3 371 H173" stroke="#5a5a5a" stroke-opacity="0.7" stroke-width="1" stroke-dasharray="4.5 2.5"/>
<path d="M53.3 325.5 V371 M173 325.5 V371" stroke="#5a5a5a" stroke-width="1.3" stroke-dasharray="4.5 2.5"/>
<rect x="56.5" y="330.79999999999995" width="111.5" height="1.2" fill="#808080"/>
<rect x="56.5" y="330.59999999999997" width="5.5" height="1.6" fill="#2a2a2a"/>
<rect x="56.5" y="334.15" width="111.5" height="1.2" fill="#808080"/>
<rect x="56.5" y="337.49999999999994" width="111.5" height="1.2" fill="#808080"/>
<rect x="56.5" y="340.84999999999997" width="93.5" height="1.2" fill="#808080"/>
<rect x="56.5" y="344.19999999999993" width="111.5" height="1.2" fill="#808080"/>
<rect x="56.5" y="343.99999999999994" width="5.5" height="1.6" fill="#2a2a2a"/>
<rect x="56.5" y="347.54999999999995" width="111.5" height="1.2" fill="#808080"/>
<rect x="56.5" y="350.9" width="95.5" height="1.2" fill="#808080"/>
<rect x="56.5" y="354.24999999999994" width="111.5" height="1.2" fill="#808080"/>
<rect x="56.5" y="354.04999999999995" width="5.5" height="1.6" fill="#2a2a2a"/>
<rect x="56.5" y="357.59999999999997" width="111.5" height="1.2" fill="#808080"/>
<rect x="56.5" y="360.94999999999993" width="111.5" height="1.2" fill="#808080"/>
<rect x="56.5" y="364.29999999999995" width="7.5" height="1.2" fill="#808080"/>
<rect x="38" y="418.6" width="142.3" height="80.4" fill="#ececdf"/>
<rect x="38" y="418.6" width="6" height="80.4" fill="#f2f2ec"/>
<rect x="45.3" y="420" width="2.7" height="77" fill="#252520"/>
<text x="53.3" y="427" font-size="6.6" fill="#9e2232" font-weight="bold" textLength="109.4" lengthAdjust="spacingAndGlyphs">Мета та завдання дослідження, об'єкт і</text>
<text x="51.3" y="433.7" font-size="6.6" fill="#9e2232" font-weight="bold" textLength="119.4" lengthAdjust="spacingAndGlyphs">предмет дослідження, методи дослідження</text>
<path d="M51.3 436.5 H172 M51.3 495.7 H172" stroke="#5a5a5a" stroke-opacity="0.7" stroke-width="1" stroke-dasharray="4.5 2.5"/>
<path d="M51.3 436.5 V495.7 M172 436.5 V495.7" stroke="#5a5a5a" stroke-width="1.3" stroke-dasharray="4.5 2.5"/>
<rect x="55.3" y="441.09999999999997" width="102.0" height="1.2" fill="#808080"/>
<rect x="55.3" y="440.9" width="18.0" height="1.6" fill="#2a2a2a"/>
<rect x="55.3" y="444.4" width="101.7" height="1.2" fill="#808080"/>
<rect x="55.3" y="447.7" width="36.7" height="1.2" fill="#808080"/>
<rect x="55.3" y="452.4" width="114.7" height="1.2" fill="#808080"/>
<rect x="55.3" y="452.2" width="32.7" height="1.6" fill="#2a2a2a"/>
<rect x="55.3" y="455.7" width="114.7" height="1.2" fill="#808080"/>
<rect x="55.3" y="459.7" width="107.4" height="1.2" fill="#808080"/>
<rect x="55.3" y="462.7" width="16.7" height="1.2" fill="#808080"/>
<rect x="55.3" y="468.4" width="92.7" height="1.2" fill="#808080"/>
<rect x="55.3" y="468.2" width="24.7" height="1.6" fill="#2a2a2a"/>
<rect x="55.3" y="473.09999999999997" width="105.7" height="1.2" fill="#808080"/>
<rect x="55.3" y="476.0" width="5.4" height="1.2" fill="#808080"/>
<rect x="55.3" y="481.7" width="103.4" height="1.2" fill="#808080"/>
<rect x="55.3" y="481.5" width="28.7" height="1.6" fill="#2a2a2a"/>
<rect x="55.3" y="484.7" width="47.4" height="1.2" fill="#808080"/>
<rect x="55.3" y="489.4" width="107.4" height="1.2" fill="#808080"/>
<rect x="55.3" y="489.2" width="27.4" height="1.6" fill="#2a2a2a"/>
<rect x="38" y="522" width="142.6" height="82" fill="#ececdf"/>
<rect x="38" y="522" width="6" height="82" fill="#f2f2ec"/>
<rect x="45" y="523.5" width="2.7" height="78.5" fill="#252520"/>
<text x="53.2" y="531.8" font-size="6.6" fill="#9e2232" font-weight="bold" textLength="90.8" lengthAdjust="spacingAndGlyphs">Наукова новизна, теоретичне та</text>
<text x="51.8" y="538" font-size="6.6" fill="#9e2232" font-weight="bold" textLength="121.9" lengthAdjust="spacingAndGlyphs">практичне значення одержаних результатів</text>
<path d="M52.5 542.5 H173 M52.5 600.6 H173" stroke="#5a5a5a" stroke-opacity="0.7" stroke-width="1" stroke-dasharray="4.5 2.5"/>
<path d="M52.5 542.5 V600.6 M173 542.5 V600.6" stroke="#5a5a5a" stroke-width="1.3" stroke-dasharray="4.5 2.5"/>
<rect x="56.7" y="553.4" width="74.3" height="1.2" fill="#808080"/>
<rect x="56.7" y="553.2" width="22.0" height="1.6" fill="#2a2a2a"/>
<rect x="56.7" y="558.0" width="106.7" height="1.2" fill="#808080"/>
<rect x="56.7" y="561.1999999999999" width="110.2" height="1.2" fill="#808080"/>
<rect x="56.7" y="564.9" width="19.3" height="1.2" fill="#808080"/>
<rect x="56.7" y="569.4" width="110.3" height="1.2" fill="#808080"/>
<rect x="56.7" y="569.2" width="5.3" height="1.6" fill="#2a2a2a"/>
<rect x="56.7" y="573.6" width="95.0" height="1.2" fill="#808080"/>
<rect x="56.7" y="577.6999999999999" width="103.3" height="1.2" fill="#808080"/>
<rect x="56.7" y="577.5" width="26.1" height="1.6" fill="#2a2a2a"/>
<rect x="56.7" y="581.4" width="105.3" height="1.2" fill="#808080"/>
<rect x="56.7" y="585.1999999999999" width="110.3" height="1.2" fill="#808080"/>
<rect x="56.7" y="588.8" width="4.1" height="1.2" fill="#808080"/>
<path d="M111.2 625.5 H118.5 V636.5 H111.2z M118.5 625.5 H126.5 V629.5 M118.5 636.5 H121" fill="none" stroke="#7a7a7a" stroke-width="1.1"/>
<path d="M121.5 636.3 L122.2 633.6 L127.3 628.5 L129 630.2 L123.9 635.3z" fill="none" stroke="#7a7a7a" stroke-width="1"/>
<path d="M434.5 630.5 h12.5 M434.5 633 h12.5 M434.5 635.5 h12.5 M436 638 h9.5" stroke="#7a7a7a" stroke-width="1"/>
<path d="M437 628.5 L440.7 625 L444.4 628.5z" fill="#7a7a7a"/>
<path d="M519.8 625.4 H533.6 V634 H528 L525 637.8 V634 H519.8z" fill="#5e5e5e"/>
<rect x="630.5" y="620" width="38.7" height="25" fill="#c9c9c9"/>
<rect x="642.8" y="625.5" width="13.8" height="11.8" fill="none" stroke="#7c7c7c" stroke-width="1.2"/>
<rect x="643" y="630.5" width="13.5" height="1.5" fill="#7c7c7c"/>
<rect x="646.5" y="627.5" width="6.0" height="1.3" fill="#7c7c7c"/>
<rect x="646.5" y="633.8" width="6.0" height="1.2" fill="#7c7c7c"/>
<rect x="682.3" y="625.5" width="5.3" height="4.8" fill="none" stroke="#7a7a7a" stroke-width="1.1"/>
<rect x="682.3" y="632.5" width="5.3" height="4.8" fill="none" stroke="#7a7a7a" stroke-width="1.1"/>
<rect x="690.7" y="625.5" width="5.3" height="4.8" fill="none" stroke="#7a7a7a" stroke-width="1.1"/>
<rect x="690.7" y="632.5" width="5.3" height="4.8" fill="none" stroke="#7a7a7a" stroke-width="1.1"/>
<path d="M721.5 625.5 Q725 625 728.5 626.5 Q732 625 735.7 625.5 V637 Q732 636 728.5 637.5 Q725 636 721.5 637z" fill="#aaa"/>
<rect x="728" y="626.5" width="1" height="11.0" fill="#eee"/>
<rect x="761.7" y="625.4" width="13.4" height="1.6" fill="#7a7a7a"/>
<path d="M763 627 V632.5 H774 V627" fill="none" stroke="#7a7a7a" stroke-width="1.2"/>
<path d="M768.4 632.5 V636 M765 637.5 H771.8" stroke="#7a7a7a" stroke-width="1.2"/>
<rect x="793.8" y="631" width="8.9" height="1.8" fill="#666"/>
<rect x="807.2" y="631.6" width="119.8" height="1.0" fill="#c8c8c8"/>
<rect x="866" y="629.5" width="1" height="5.0" fill="#c8c8c8"/>
<rect x="825.6" y="625" width="5.0" height="13.5" fill="#666"/>
<rect x="931" y="631" width="11.3" height="1.8" fill="#666"/>
<rect x="935.75" y="626.3" width="1.8" height="11.2" fill="#666"/>
<path d="M997.5 626.8 H1010.5 V640 H997.5z" fill="none" stroke="#8a8a8a" stroke-width="1.1"/>
<path d="M999.5 628.8 L1002.5 631.8 M1008.5 628.8 L1005.5 631.8 M999.5 638 L1002.5 635 M1008.5 638 L1005.5 635" stroke="#8a8a8a" stroke-width="1.1"/>
<defs>
<filter id="bl1" x="-20%" y="-20%" width="140%" height="140%"><feGaussianBlur stdDeviation="1.2"/></filter>
<filter id="bl2" x="-20%" y="-20%" width="140%" height="140%"><feGaussianBlur stdDeviation="2.5"/></filter>
<filter id="bl05"><feGaussianBlur stdDeviation="0.7"/></filter>
<clipPath id="camclip"><rect x="1261" y="9" width="201" height="149" rx="10"/></clipPath>
<clipPath id="avM"><circle cx="1147.7" cy="246.2" r="27.3"/></clipPath>
<clipPath id="avY"><circle cx="1361.4" cy="245.5" r="26.5"/></clipPath>
<clipPath id="avO"><circle cx="1147.5" cy="407.9" r="26.8"/></clipPath>
<clipPath id="avV"><circle cx="1362" cy="570.4" r="26.8"/></clipPath>
<linearGradient id="wallG" x1="0" y1="0" x2="0.3" y2="1"><stop offset="0" stop-color="#625c5d"/><stop offset="0.5" stop-color="#7d7473"/><stop offset="1" stop-color="#9a908e"/></linearGradient>
<radialGradient id="avBlue" cx="50%" cy="45%" r="55%"><stop offset="0" stop-color="#6373cf"/><stop offset="1" stop-color="#5766c2"/></radialGradient>
<radialGradient id="halo" cx="50%" cy="50%" r="50%"><stop offset="0.75" stop-color="#5a5f30" stop-opacity="0.9"/><stop offset="1" stop-color="#43471f" stop-opacity="0"/></radialGradient>
</defs>
<circle cx="1147.4" cy="83.2" r="27.1" fill="url(#avBlue)"/>
<text x="1147.4" y="93.6" font-size="27" fill="#ffffff" text-anchor="middle" textLength="18" lengthAdjust="spacingAndGlyphs">О</text>
<g clip-path="url(#camclip)">
<rect x="1261" y="9" width="201" height="149" fill="url(#wallG)"/>
<g filter="url(#bl1)">
<rect x="1261" y="9" width="201" height="8" fill="#4f4b4f"/>
<rect x="1384" y="9" width="22" height="149" fill="#7e5646"/>
<rect x="1387" y="25" width="11" height="133" fill="#97634e"/>
<rect x="1398" y="20" width="6" height="138" fill="#b08a80"/>
<rect x="1405" y="9" width="12" height="149" fill="#303034"/>
<rect x="1417" y="9" width="45" height="149" fill="#d6d6d8"/>
<rect x="1417" y="9" width="45" height="17" fill="#b5b5b9"/>
<rect x="1443" y="24" width="7" height="134" fill="#96969a"/>
<rect x="1450" y="24" width="12" height="134" fill="#eeeeef"/>
<path d="M1297 158 Q1302 130 1325 123 L1372 122 Q1395 126 1405 158z" fill="#17171b"/>
<path d="M1366 122 Q1405 126 1434 158 L1380 158 Q1378 140 1366 122z" fill="#1c5b57"/>
<path d="M1316 72 Q1314 124 1343 126 Q1370 124 1369 72z" fill="#4e3e3c"/>
<path d="M1336 76 Q1366 76 1366 100 Q1364 122 1345 124 Q1332 110 1336 76z" fill="#8a7470"/>
<ellipse cx="1349" cy="102" rx="6" ry="14" fill="#a8928c"/>
<path d="M1306 100 Q1302 62 1318 48 Q1334 38 1352 41 Q1372 44 1380 62 Q1385 78 1382 92 L1372 84 Q1366 74 1350 76 Q1340 70 1330 78 Q1320 82 1317 100z" fill="#151317"/>
<rect x="1305" y="90" width="13" height="24" rx="6" fill="#0f0f11"/>
<rect x="1367" y="84" width="15" height="24" rx="6" fill="#0f0f11"/>
<path d="M1310 115 Q1307 130 1311 145" fill="none" stroke="#c8c4c4" stroke-width="1"/>
</g>
</g>
<circle cx="1147.7" cy="246.2" r="36" fill="url(#halo)"/>
<g clip-path="url(#avM)"><g filter="url(#bl1)">
<rect x="1118" y="216" width="60" height="60" fill="#74825a"/>
<circle cx="1132" cy="232" r="9" fill="#a0b080"/>
<circle cx="1165" cy="228" r="8" fill="#97a878"/>
<rect x="1162" y="235" width="16" height="27" fill="#383a2c"/>
<ellipse cx="1145" cy="243" rx="8.5" ry="10" fill="#b39382"/>
<path d="M1134 240 Q1134 226 1146 226 Q1158 227 1156 241 Q1150 233 1140 236z" fill="#3b3028"/>
<path d="M1120 276 Q1122 256 1140 253 L1152 253 Q1170 256 1173 276z" fill="#d9dadd"/>
</g></g>
<circle cx="1147.7" cy="246.2" r="28.6" fill="none" stroke="#bdd66c" stroke-width="2.6"/>
<rect x="1048.2" y="172.5" width="198.6" height="147.6" rx="9" fill="none" stroke="#c5d874" stroke-width="2.6"/>
<g clip-path="url(#avY)"><g filter="url(#bl1)">
<rect x="1334" y="218" width="55" height="55" fill="#8c8a84"/>
<rect x="1334" y="218" width="55" height="14" fill="#b9bdba"/>
<path d="M1334 238 Q1350 228 1362 232 Q1378 228 1389 236 V250 H1334z" fill="#666660"/>
<rect x="1334" y="250" width="55" height="23" fill="#8e8b80"/>
<path d="M1344 273 L1352 248 Q1361 240 1368 250 L1376 273z" fill="#1c1e2a"/>
<circle cx="1359" cy="243" r="4.5" fill="#1c1a20"/>
<path d="M1371 262 L1375 255 L1377 262z" fill="#c09090"/>
</g></g>
<g clip-path="url(#avO)"><g filter="url(#bl1)">
<rect x="1120" y="380" width="55" height="56" fill="#b9c2c2"/>
<rect x="1120" y="380" width="15" height="56" fill="#8fa888"/>
<ellipse cx="1127" cy="397" rx="5" ry="10" fill="#6f9a50"/>
<rect x="1160" y="385" width="15" height="51" fill="#a0a8b0"/>
<rect x="1136" y="380" width="14" height="15" fill="#d8dcdc"/>
<ellipse cx="1146.5" cy="405" rx="5.5" ry="7" fill="#a48472"/>
<path d="M1141 400 Q1146 395 1152 400 V397 Q1146 393 1141 397z" fill="#3a2a24"/>
<path d="M1129 436 L1132 417 Q1146 411 1162 417 L1166 436z" fill="#221f1f"/>
</g></g>
<circle cx="1362" cy="408.1" r="27" fill="#f4581f"/>
<text x="1362" y="418.5" font-size="27" fill="#ffffff" text-anchor="middle" textLength="18" lengthAdjust="spacingAndGlyphs">О</text>
<circle cx="1128" cy="559.4" r="21.4" fill="#33691e"/>
<circle cx="1169.7" cy="559.4" r="23.2" fill="#3c3c3e"/>
<circle cx="1169.7" cy="559.4" r="21.8" fill="#fb5c14"/>
<text x="1128.6" y="567.9" font-size="22" fill="#f4fff0" text-anchor="middle" textLength="19.4" lengthAdjust="spacingAndGlyphs">Ю</text>
<rect x="1168.8" y="552" width="2.2" height="15.9" fill="#ffffff"/>
<text x="1147.7" y="601.4" font-size="14" fill="#ffffff" font-weight="bold" text-anchor="middle" textLength="67.8" lengthAdjust="spacingAndGlyphs">Ще 17 осіб</text>
<g clip-path="url(#avV)"><g filter="url(#bl1)">
<rect x="1335" y="543" width="55" height="55" fill="#8a9090"/>
<rect x="1335" y="543" width="25" height="32" fill="#c2bca6"/>
<rect x="1364" y="543" width="26" height="27" fill="#3e4446"/>
<rect x="1335" y="570" width="55" height="8" fill="#b8bcbc"/>
<rect x="1335" y="578" width="25" height="20" fill="#8c9090"/>
<ellipse cx="1359.5" cy="563" rx="7.5" ry="10" fill="#a28070"/>
<path d="M1352 558 Q1353 550 1361 550 Q1369 551 1369 560 L1366 556 Q1360 553 1354 557z" fill="#2a2422"/>
<path d="M1343 598 Q1345 580 1358 574 L1372 574 Q1384 580 1388 598z" fill="#3f4040"/>
</g></g>
<circle cx="1439.5" cy="194" r="12" fill="#7a2212" filter="url(#bl05)"/>
<rect x="1436.9" y="186.2" width="5.2" height="9.5" rx="2.6" fill="#f5c1ad"/>
<path d="M1434.5 193.5 Q1434.5 199 1439.5 199 Q1444.5 199 1444.5 193.5 M1439.5 199 V202" fill="none" stroke="#f5c1ad" stroke-width="1.6"/>
<path d="M1432.3 187.7 L1446.7 201.5" stroke="#7a2212" stroke-width="3.2"/>
<path d="M1432.3 187.7 L1446.7 201.5" stroke="#f5c1ad" stroke-width="1.6" stroke-linecap="round"/>
<circle cx="1225" cy="356" r="12" fill="#0e3b48" filter="url(#bl05)"/>
<rect x="1222.4" y="348.2" width="5.2" height="9.5" rx="2.6" fill="#8fd3e3"/>
<path d="M1220 355.5 Q1220 361 1225 361 Q1230 361 1230 355.5 M1225 361 V364" fill="none" stroke="#8fd3e3" stroke-width="1.6"/>
<path d="M1217.8 349.7 L1232.2 363.5" stroke="#0e3b48" stroke-width="3.2"/>
<path d="M1217.8 349.7 L1232.2 363.5" stroke="#8fd3e3" stroke-width="1.6" stroke-linecap="round"/>
<circle cx="1439.5" cy="356" r="12" fill="#5e200e" filter="url(#bl05)"/>
<rect x="1436.9" y="348.2" width="5.2" height="9.5" rx="2.6" fill="#f2c0a8"/>
<path d="M1434.5 355.5 Q1434.5 361 1439.5 361 Q1444.5 361 1444.5 355.5 M1439.5 361 V364" fill="none" stroke="#f2c0a8" stroke-width="1.6"/>
<path d="M1432.3 349.7 L1446.7 363.5" stroke="#5e200e" stroke-width="3.2"/>
<path d="M1432.3 349.7 L1446.7 363.5" stroke="#f2c0a8" stroke-width="1.6" stroke-linecap="round"/>
<circle cx="1439.5" cy="518.8" r="12" fill="#0f5233" filter="url(#bl05)"/>
<rect x="1436.9" y="510.99999999999994" width="5.2" height="9.5" rx="2.6" fill="#a6e3b8"/>
<path d="M1434.5 518.3 Q1434.5 523.8 1439.5 523.8 Q1444.5 523.8 1444.5 518.3 M1439.5 523.8 V526.8" fill="none" stroke="#a6e3b8" stroke-width="1.6"/>
<path d="M1432.3 512.5 L1446.7 526.3" stroke="#0f5233" stroke-width="3.2"/>
<path d="M1432.3 512.5 L1446.7 526.3" stroke="#a6e3b8" stroke-width="1.6" stroke-linecap="round"/>
<text x="1059" y="144.8" font-size="14.5" fill="#ffffff" font-weight="bold" textLength="98" lengthAdjust="spacingAndGlyphs">Олексій Півень</text>
<text x="1273" y="144.8" font-size="14.5" fill="#ffffff" font-weight="bold" textLength="113.6" lengthAdjust="spacingAndGlyphs">Давид Чахмахчян</text>
<text x="1059" y="307.1" font-size="14.5" fill="#ffffff" font-weight="bold" textLength="112" lengthAdjust="spacingAndGlyphs">Максим Сидоров</text>
<text x="1273" y="307.1" font-size="14.5" fill="#ffffff" font-weight="bold" textLength="88" lengthAdjust="spacingAndGlyphs">Юлія Барська</text>
<text x="1059" y="469.5" font-size="14.5" fill="#ffffff" font-weight="bold" textLength="108.6" lengthAdjust="spacingAndGlyphs">Олег Семененко</text>
<text x="1273" y="469.5" font-size="14.5" fill="#ffffff" font-weight="bold" textLength="133.2" lengthAdjust="spacingAndGlyphs">Олена Стрельнікова</text>
<text x="1273" y="631.8" font-size="14.5" fill="#ffffff" font-weight="bold" textLength="153.3" lengthAdjust="spacingAndGlyphs">Владислав Пархоменко</text>
</svg></body></html>
